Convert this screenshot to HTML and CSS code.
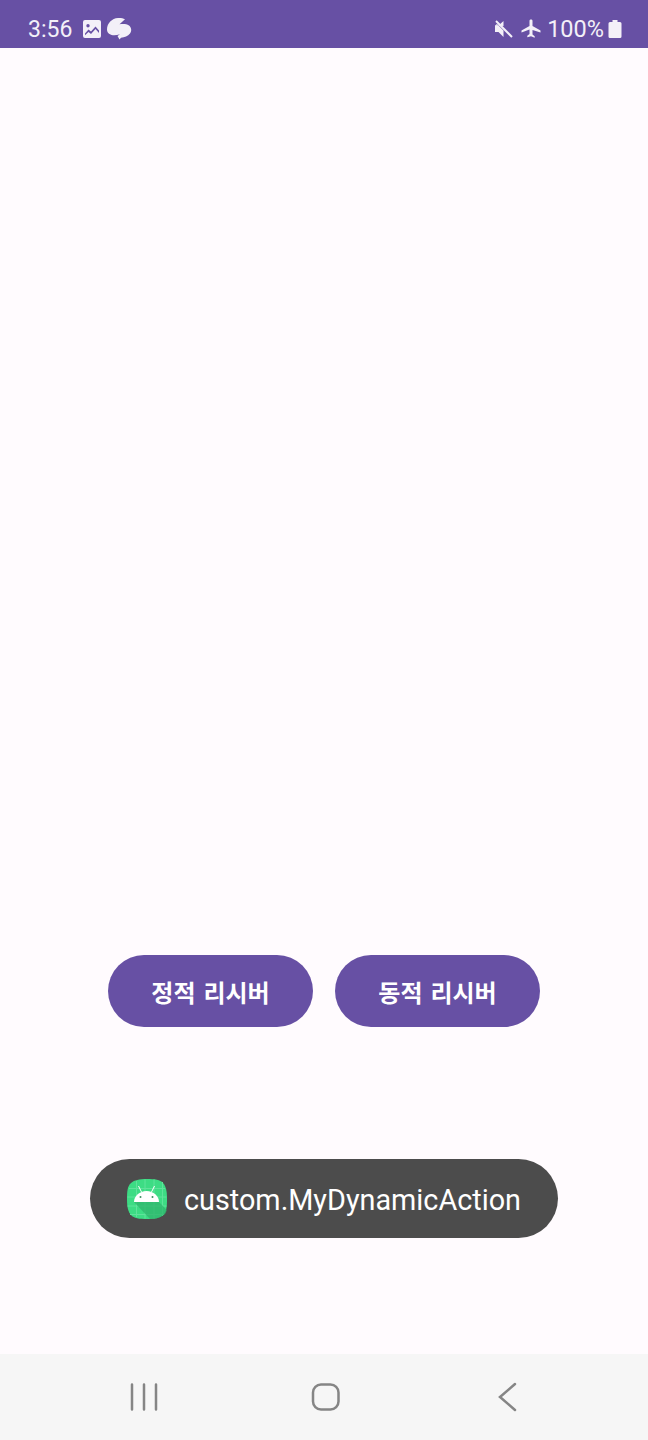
FILE: index.html
```html
<!DOCTYPE html>
<html lang="ko">
<head>
    <meta charset="UTF-8">
    <meta name="viewport" content="width=device-width, initial-scale=1.0">
    <title>Receiver</title>
    <link rel="stylesheet" href="styles.css">
</head>
<body>
    <div class="screen">
        <div class="status-bar">
            <div class="status-left">
                <span class="clock">3:56</span>
                <svg class="icon" width="20" height="20" viewBox="0 0 20 20">
                    <path fill="#f3f0f8" fill-rule="evenodd" d="M3 1h14a2 2 0 0 1 2 2v14a2 2 0 0 1-2 2H3a2 2 0 0 1-2-2V3a2 2 0 0 1 2-2zM3 14.500v1.800l3.500-3.300 2.500 2 4.500-5 3.500 4v-2.500l-3.500-4-4.500 5-2.500-2zM6 5a1.700 1.700 0 1 0 0 3.400A1.700 1.700 0 0 0 6 5z"/>
                </svg>
                <svg class="icon" width="25" height="24" viewBox="0 0 25 24">
                    <path fill="#f3f0f8" d="M0 12.500C0 6 5 1.500 11 1c2.500-.2 5 .2 7 1.200l-5.500 5c3.500-.5 7-.5 9.500 1.300 2.500 2 3 5.500 1 8-2 2.800-5.500 3.800-9 4.300l-1.500 1.700-2-3.500 2.500-1.700C9 18.500 5 18.800 2.500 17 1 16 0 14.500 0 12.500z"/>
                </svg>
            </div>
            <div class="status-right">
                <svg class="icon" width="20" height="20" viewBox="0 0 20 20">
                    <path fill="#f3f0f8" d="M1 6.500h3.500L9.500 2v5zM1 6.500v6.500h3.500l5 5v-6.500L3 5z"/>
                    <path stroke="#f3f0f8" stroke-width="2" d="M2 2l16 16"/>
                </svg>
                <svg class="icon plane" width="20" height="20" viewBox="0 0 20 20">
                    <path fill="#f3f0f8" d="M8.500 1.800c0-1.800 3-1.800 3 0v5.200l8 4.500v2l-8-2.500v4.500l2.200 1.700v1.500L10 17.200 6.300 18.300v-1.500l2.200-1.700V10.500L.5 13.500v-2l8-4.500z"/>
                </svg>
                <span class="battery-text">100%</span>
                <svg class="icon" width="14" height="20" viewBox="0 0 14 20">
                    <path fill="#f3f0f8" d="M4.500 1h5v2H12a1.500 1.500 0 0 1 1.500 1.500v13A1.500 1.500 0 0 1 12 19H2a1.500 1.500 0 0 1-1.500-1.500v-13A1.500 1.500 0 0 1 2 3h2.500z"/>
                </svg>
            </div>
        </div>

        <div class="content">
            <div class="button-row">
                <button class="pill">정적 리시버</button>
                <button class="pill">동적 리시버</button>
            </div>
            <div class="toast">
                <svg class="toast-icon" width="42" height="42" viewBox="0 0 42 42">
                    <path fill="#3ddc84" d="M21 1c8 0 13 .5 16 4s4 8 4 16-.5 13-4 16-8 4-16 4-13-.5-16-4-4-8-4-16 .5-13 4-16 8-4 16-4z"/>
                    <path stroke="#5fe39b" stroke-width="1" d="M3 10.500h36M1.500 19h39M1.500 28h39M4 36.500h34M10.500 3v36M19 1.500v39M28 1.500v39M36.500 4v34"/>
                    <path fill="#2fb56c" fill-opacity=".75" d="M8 24h25l7.800 8c-1 3.500-2 4.500-3.800 5.500-3 2.500-8 3.500-13 3.500z"/>
                    <path stroke="#fff" stroke-width="1" d="M12.500 8l3 6M28.500 8l-3 6"/>
                    <path fill="#fff" d="M8 24c0-6 5.500-11 12.500-11S33 18 33 24z"/>
                    <circle cx="14.500" cy="19" r="1" fill="#3a8f60"/>
                    <circle cx="26.500" cy="19" r="1" fill="#3a8f60"/>
                </svg>
                <span class="toast-text">custom.MyDynamicAction</span>
            </div>
        </div>

        <div class="nav-bar">
            <svg width="30" height="30" viewBox="0 0 30 30">
                <path stroke="#858585" stroke-width="2.500" stroke-linecap="round" d="M3 2.500v25M15 2.500v25M27 2.500v25"/>
            </svg>
            <svg width="30" height="30" viewBox="0 0 30 30">
                <rect x="2" y="2.500" width="25.500" height="25" rx="8" fill="none" stroke="#858585" stroke-width="2.500"/>
            </svg>
            <svg width="30" height="30" viewBox="0 0 30 30">
                <path fill="none" stroke="#858585" stroke-width="2.500" stroke-linecap="round" d="M22 2L7 15l15 13"/>
            </svg>
        </div>
    </div>
</body>
</html>
```

FILE: styles.css
```css
* {
    box-sizing: border-box;
    margin: 0;
    padding: 0;
}

body {
    width: 648px;
    height: 1440px;
    overflow: hidden;
    background-color: #fffbfe;
    font-family: 'Roboto', 'Noto Sans CJK KR', sans-serif;
}

.screen {
    display: flex;
    flex-direction: column;
    height: 1440px;
}

.status-bar {
    display: flex;
    align-items: center;
    justify-content: space-between;
    height: 48px;
    padding: 10px 26px 0 28px;
    background-color: #6750a4;
    color: #f3f0f8;
}

.status-left,
.status-right {
    display: flex;
    align-items: center;
}

.status-left .icon {
    margin-left: 10px;
}

.status-left .icon + .icon {
    margin-left: 5px;
}

.clock,
.battery-text {
    font-size: 23px;
}

.battery-text {
    margin-right: 4px;
    font-size: 23.500px;
}

.plane {
    margin-left: 7px;
    margin-right: 6px;
}

.content {
    flex: 1;
    display: flex;
    flex-direction: column;
    align-items: center;
    padding-top: 907px;
}

.button-row {
    display: flex;
    gap: 22px;
}

.pill {
    width: 205px;
    height: 72px;
    border: none;
    border-radius: 36px;
    background-color: #6750a4;
    color: #fff;
    font-family: inherit;
    font-size: 24px;
    font-weight: 700;
    word-spacing: 2px;
}

.toast {
    display: flex;
    align-items: center;
    width: 468px;
    height: 79px;
    margin-top: 132px;
    padding-left: 36px;
    border-radius: 40px;
    background-color: #4c4c4c;
}

.toast-icon {
    flex-shrink: 0;
}

.toast-text {
    margin-left: 16px;
    padding-top: 2px;
    font-size: 28.800px;
    color: #fff;
}

.nav-bar {
    display: flex;
    align-items: center;
    justify-content: space-between;
    height: 86px;
    padding: 0 125px 0 129px;
    background-color: #f6f6f6;
}
```
